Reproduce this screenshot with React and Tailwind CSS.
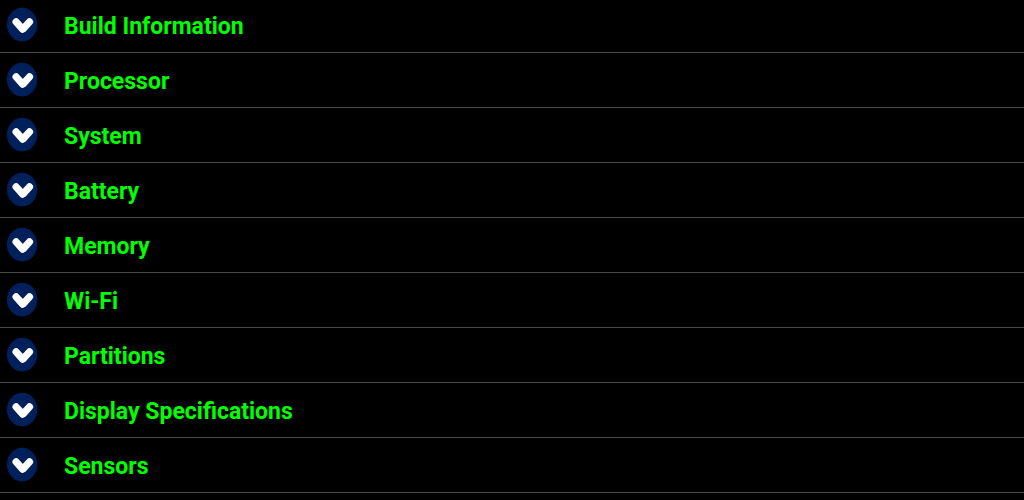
const sections = [
  'Build Information',
  'Processor',
  'System',
  'Battery',
  'Memory',
  'Wi-Fi',
  'Partitions',
  'Display Specifications',
  'Sensors',
];

function ExpandIcon() {
  return (
    <svg viewBox="0 0 32 36" className="h-9 w-8 shrink-0">
      <ellipse cx="16.1" cy="17.6" rx="15.2" ry="16.8" fill="#00205c" />
      <path
        d="M10.1 14.9 L16.8 22.2 L23.5 14.9"
        fill="none"
        stroke="#fff"
        strokeWidth="7.2"
        strokeLinecap="round"
        strokeLinejoin="round"
      />
    </svg>
  );
}

function SectionRow({ title }) {
  return (
    <li className="flex h-[55px] items-start border-b border-[#4a4a4a] pl-1.5">
      <div className="mt-[9px]">
        <ExpandIcon />
      </div>
      <span className="ml-[26px] mt-[13px] text-[23px] leading-8 font-bold text-[#00ff00]">{title}</span>
    </li>
  );
}

export default function App() {
  return (
    <div className="h-[500px] overflow-hidden bg-black font-['Roboto',sans-serif]">
      <ul className="-mt-0.5">
        {sections.map(title => (
          <SectionRow key={title} title={title} />
        ))}
      </ul>
    </div>
  );
}
